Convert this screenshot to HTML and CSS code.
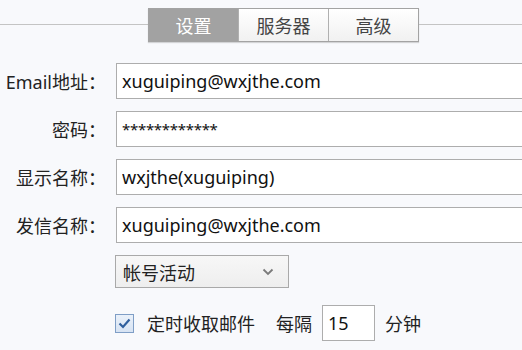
FILE: index.html
```html
<html lang="zh">
<head>
    <meta charset="UTF-8">
    <meta name="viewport" content="width=device-width, initial-scale=1.0">
    <title>帐号设置</title>
    <link rel="stylesheet" href="styles.css">
</head>
<body>
    <div class="tab-bar">
        <span class="tab-line tab-line-left"></span>
        <div class="tabs">
            <span class="tab active">设置</span>
            <span class="tab">服务器</span>
            <span class="tab">高级</span>
        </div>
        <span class="tab-line"></span>
    </div>
    <form class="account-form">
        <label for="email">Email地址：</label>
        <input type="text" id="email" value="xuguiping@wxjthe.com">
        <label for="password">密码：</label>
        <input type="text" id="password" class="password" value="************">
        <label for="displayName">显示名称：</label>
        <input type="text" id="displayName" value="wxjthe(xuguiping)">
        <label for="senderName">发信名称：</label>
        <input type="text" id="senderName" value="xuguiping@wxjthe.com">
        <span></span>
        <div class="select-box">
            <span>帐号活动</span>
            <svg width="12" height="8" viewBox="0 0 12 8"><path d="M1.5 1.5 L6 6 L10.5 1.5" fill="none" stroke="#7a7a7a" stroke-width="1.8"/></svg>
        </div>
        <span></span>
        <div class="check-row">
            <span class="check-box">
                <svg width="13" height="11" viewBox="0 0 13 11"><path d="M1.5 5.5 L5 9 L11.5 1.5" fill="none" stroke="#2f5f9e" stroke-width="2.2"/></svg>
            </span>
            <span class="check-label">定时收取邮件</span>
            <span class="every">每隔</span>
            <input type="text" class="minutes" value="15">
            <span>分钟</span>
        </div>
    </form>
</body>
</html>
```

FILE: styles.css
```css
body
{
    margin: 0;
    width: 522px;
    height: 350px;
    overflow: hidden;
    background: #f8f9fc;
    font-family: "Noto Sans", "Noto Sans CJK SC", sans-serif;
    font-size: 18px;
    color: #222;
}
.tab-bar
{
    display: flex;
    align-items: center;
    padding-top: 8px;
}
.tab-line
{
    flex: 1;
    height: 1px;
    background: #c4c4c4;
    margin-top: -2px;
}
.tab-line-left
{
    flex: 0 0 148px;
}
.tabs
{
    display: flex;
    border: 1px solid #a3a3a3;
    box-shadow: 0 1px 1px rgba(0, 0, 0, 0.15);
}
.tab
{
    width: 89px;
    height: 32px;
    display: flex;
    align-items: center;
    justify-content: center;
    background: linear-gradient(#ffffff, #f1f1f1);
    color: #444;
    border-left: 1px solid #b0b0b0;
}
.tab:first-child
{
    border-left: none;
}
.tab.active
{
    background: #a2a2a2;
    color: #fff;
}
.account-form
{
    display: grid;
    grid-template-columns: 106px 1fr;
    column-gap: 10px;
    row-gap: 12px;
    align-items: center;
    margin-top: 21px;
}
.account-form label
{
    text-align: right;
    white-space: nowrap;
}
.account-form input
{
    width: 420px;
    height: 36px;
    padding: 0 5px;
    border: 1px solid #adadad;
    background: #fff;
    font-family: inherit;
    font-size: 18px;
    color: #111;
    box-sizing: border-box;
    outline: none;
}
.account-form .password
{
    font-size: 15px;
    letter-spacing: -0.3px;
}
.select-box
{
    width: 174px;
    height: 33px;
    margin-left: -1px;
    box-sizing: border-box;
    border: 1px solid #a9a9a9;
    background: linear-gradient(#f7f7f7, #eeeeee);
    display: flex;
    align-items: center;
    justify-content: space-between;
    padding: 0 14px 0 7px;
}
.check-row
{
    display: flex;
    align-items: center;
    margin-top: 5px;
}
.check-box
{
    width: 19px;
    height: 19px;
    box-sizing: border-box;
    border: 1px solid #7f9ec6;
    background: linear-gradient(#eaf1fa, #d7e3f3);
    display: flex;
    align-items: center;
    justify-content: center;
    margin-left: -1px;
}
.check-label
{
    margin-left: 13px;
}
.every
{
    margin-left: 21px;
}
.account-form .minutes
{
    width: 53px;
    height: 36px;
    margin: 0 10px 0 10px;
}
```
